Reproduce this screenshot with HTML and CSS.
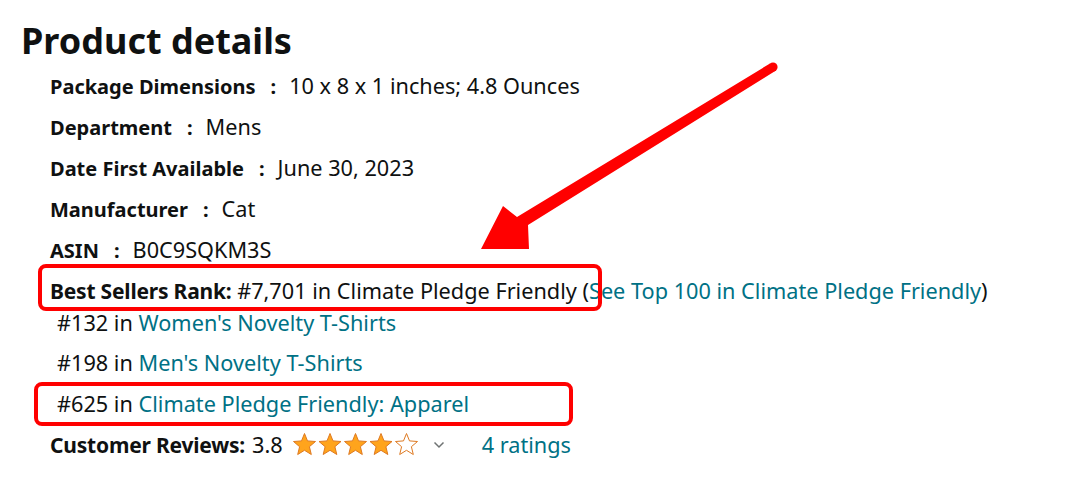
FILE: index.html
```html
<!DOCTYPE html>
<html lang="en">
<head>
<meta charset="utf-8">
<title>Product details</title>
<link rel="stylesheet" href="styles.css">
</head>
<body>
<div class="page">
  <h2 class="title">Product details</h2>
  <ul class="details">
    <li class="row"><span class="label">Package Dimensions</span><span class="colon">:</span><span class="value">10 x 8 x 1 inches; 4.8 Ounces</span></li>
    <li class="row"><span class="label">Department</span><span class="colon">:</span><span class="value">Mens</span></li>
    <li class="row"><span class="label">Date First Available</span><span class="colon">:</span><span class="value">June 30, 2023</span></li>
    <li class="row"><span class="label">Manufacturer</span><span class="colon">:</span><span class="value">Cat</span></li>
    <li class="row"><span class="label">ASIN</span><span class="colon">:</span><span class="value">B0C9SQKM3S</span></li>
    <li class="row rank">
      <span class="label">Best Sellers Rank:</span> #7,701 in Climate Pledge Friendly (<a class="link" href="#">See Top 100 in Climate Pledge Friendly</a>)
      <ul class="subranks">
        <li class="sub first">#132 in <a class="link" href="#">Women's Novelty T-Shirts</a></li>
        <li class="sub">#198 in <a class="link" href="#">Men's Novelty T-Shirts</a></li>
        <li class="sub">#625 in <a class="link" href="#">Climate Pledge Friendly: Apparel</a></li>
      </ul>
    </li>
    <li class="row reviews">
      <span class="label">Customer Reviews:</span><span class="score">3.8</span>
      <span class="stars">
        <svg width="128" height="25" viewBox="0 0 128 25" aria-hidden="true">
          <defs>
            <path id="star" d="M12.5 1.5 L15.5 8.9 L23.5 9.5 L17.4 14.7 L19.3 22.5 L12.5 18.3 L5.7 22.5 L7.6 14.7 L1.5 9.5 L9.5 8.9 Z"/>
          </defs>
          <use href="#star" x="0" class="full"/>
          <use href="#star" x="25.5" class="full"/>
          <use href="#star" x="51" class="full"/>
          <use href="#star" x="76.5" class="full"/>
          <use href="#star" x="102" class="empty"/>
        </svg>
      </span>
      <svg class="chev" width="12" height="8" viewBox="0 0 12 8" aria-hidden="true"><path d="M1.5 1.5 L6 6 L10.5 1.5" fill="none" stroke="#6f7373" stroke-width="1.5"/></svg>
      <a class="link ratings" href="#">4 ratings</a>
    </li>
  </ul>

  <div class="mark mark-rank"></div>
  <div class="mark mark-apparel"></div>
  <svg class="arrow" width="1080" height="488" viewBox="0 0 1080 488" aria-hidden="true">
    <path d="M770 63.5 L776 70.5 L528 225 L529 249 L481 249 L503 206 L517 217 Z" fill="#ff0000"/>
    <circle cx="773" cy="67" r="4.6" fill="#ff0000"/>
  </svg>
</div>
</body>
</html>
```

FILE: styles.css
```css
* { box-sizing: border-box; }
html, body { margin: 0; padding: 0; background: #ffffff; }
body {
  font-family: "Noto Sans", "Open Sans", "DejaVu Sans", sans-serif;
  color: #0f1111;
}
.page {
  position: relative;
  width: 1080px;
  height: 488px;
  overflow: hidden;
  padding: 16px 0 0 21px;
}
.title {
  margin: 0 0 -1px;
  font-size: 36px;
  font-weight: 700;
  line-height: 50px;
}
.details {
  list-style: none;
  margin: 0;
  padding: 0 0 0 29px;
  font-size: 21.7px;
}
.row {
  line-height: 41px;
  white-space: nowrap;
}
.label { font-weight: 700; font-size: 20px; line-height: 20px; }
.rank .label, .reviews .label { font-size: 21px; letter-spacing: -0.2px; }
.colon { font-weight: 700; font-size: 20px; line-height: 20px; margin: 0 13px 0 15px; }
.link { color: #007185; text-decoration: none; }
.subranks {
  list-style: none;
  margin: 0;
  padding: 0 0 0 7px;
}
.sub { line-height: 40.5px; }
.sub.first { line-height: 24px; margin-bottom: 8px; }
.reviews { display: flex; align-items: center; height: 41px; }
.score { margin-left: 7px; }
.stars { display: inline-flex; margin-left: 9px; }
.stars .full { fill: #ffa41c; stroke: #de7921; stroke-width: 1; }
.stars .empty { fill: #ffffff; stroke: #de7921; stroke-width: 1; }
.chev { margin-left: 13px; }
.ratings { margin-left: 37px; }
.mark {
  position: absolute;
  border: 4px solid #ff0000;
  border-radius: 8px;
}
.mark-rank { left: 38px; top: 264px; width: 564px; height: 47px; }
.mark-apparel { left: 34px; top: 382px; width: 539px; height: 44px; }
.arrow { position: absolute; left: 0; top: 0; pointer-events: none; }
```
